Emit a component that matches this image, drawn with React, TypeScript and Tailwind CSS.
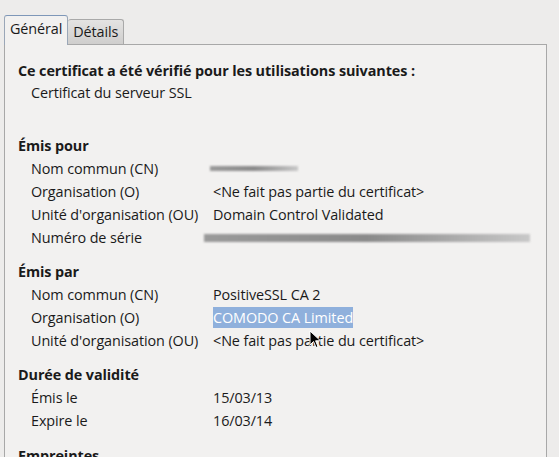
import React from "react";

const font = { fontFamily: '"Open Sans", "DejaVu Sans", sans-serif' };

function Row({ label, children }: { label: string; children?: React.ReactNode }) {
  return (
    <div className="flex h-[23px] items-center pl-[13px]">
      <div className="w-[182px] shrink-0 whitespace-nowrap">{label}</div>
      <div className="flex-1 whitespace-nowrap">{children}</div>
    </div>
  );
}

function Blur({ w, h, ml = 0 }: { w: number; h: number; ml?: number }) {
  return (
    <div
      className="bg-gradient-to-r from-[#9a9a9a] via-[#8a8a8a] to-[#c8c8c8] blur-[1px]"
      style={{ width: w, height: h, marginLeft: ml }}
    />
  );
}

export default function App() {
  return (
    <div className="relative h-[457px] w-[559px] overflow-hidden bg-[#edeceb] text-[14.4px] tracking-[-0.1px] text-[#1a1a1a]" style={font}>
      <div className="flex items-end pl-[4px] pt-[15px]">
        <div className="relative z-10 -mb-px h-[30px] rounded-t-[3px] border border-b-0 border-[#9aa7b8] border-t-[#7e97b8] bg-[#f2f1f0] px-[5px] pt-[3px] leading-[20px]">
          Général
        </div>
        <div className="h-[25px] rounded-t-[3px] border border-l-0 border-b-0 border-[#a9a9a9] bg-gradient-to-b from-[#e4e3e2] to-[#cfcecd] px-[5px] pt-[2px] leading-[20px]">
          Détails
        </div>
      </div>
      <div className="ml-[4px] h-[420px] w-[543px] border border-[#a8a8a8] bg-[#f2f1f0] pl-[13px] pt-[14px]">
        <div className="whitespace-nowrap font-bold leading-[23px]">Ce certificat a été vérifié pour les utilisations suivantes :</div>
        <div className="pl-[13px] leading-[22px]">Certificat du serveur SSL</div>

        <div className="mt-[30px] font-bold leading-[23px]">Émis pour</div>
        <Row label="Nom commun (CN)">
          <Blur w={88} h={5} ml={-3} />
        </Row>
        <Row label="Organisation (O)">&lt;Ne fait pas partie du certificat&gt;</Row>
        <Row label="Unité d'organisation (OU)">Domain Control Validated</Row>
        <Row label="Numéro de série">
          <Blur w={326} h={8} ml={-9} />
        </Row>

        <div className="mt-[11px] font-bold leading-[23px]">Émis par</div>
        <Row label="Nom commun (CN)">PositiveSSL CA 2</Row>
        <Row label="Organisation (O)">
          <span className="bg-[#8fb0dc] py-[1px] text-white">COMODO CA Limited</span>
        </Row>
        <Row label="Unité d'organisation (OU)">&lt;Ne fait pas partie du certificat&gt;</Row>

        <div className="mt-[11px] font-bold leading-[23px]">Durée de validité</div>
        <Row label="Émis le">15/03/13</Row>
        <Row label="Expire le">16/03/14</Row>

        <div className="mt-[12px] font-bold leading-[23px]">Empreintes</div>
      </div>

      <svg className="absolute left-[309px] top-[330px]" width="14" height="20" viewBox="0 0 14 20">
        <path d="M1 1 L1 15 L4.5 11.5 L7 17.5 L9 16.6 L6.6 10.8 L11.5 10.8 Z" fill="#000" stroke="#fff" strokeWidth="1" />
      </svg>
    </div>
  );
}
